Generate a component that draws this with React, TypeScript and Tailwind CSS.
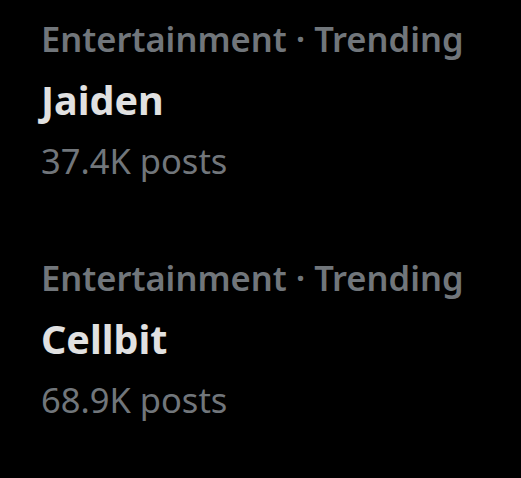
import React from "react";

type Trend = { category: string; title: string; posts: string };

const trends: Trend[] = [
  { category: "Entertainment · Trending", title: "Jaiden", posts: "37.4K posts" },
  { category: "Entertainment · Trending", title: "Cellbit", posts: "68.9K posts" },
];

export default function App() {
  return (
    <div
      className="w-[521px] h-[478px] bg-black overflow-hidden flex flex-col gap-[67px] pl-[41px] pt-[14px]"
      style={{ fontFamily: '"Segoe UI", "Noto Sans", sans-serif' }}
    >
      {trends.map((t) => (
        <div key={t.title} className="flex flex-col">
          <div className="text-[34.5px] leading-[50px] font-semibold text-[#71767b] whitespace-nowrap">
            {t.category}
          </div>
          <div className="text-[39.5px] leading-[72px] font-bold text-[#e1e1e1] whitespace-nowrap">
            {t.title}
          </div>
          <div className="text-[34.5px] leading-[50px] text-[#71767b] whitespace-nowrap">
            {t.posts}
          </div>
        </div>
      ))}
    </div>
  );
}
